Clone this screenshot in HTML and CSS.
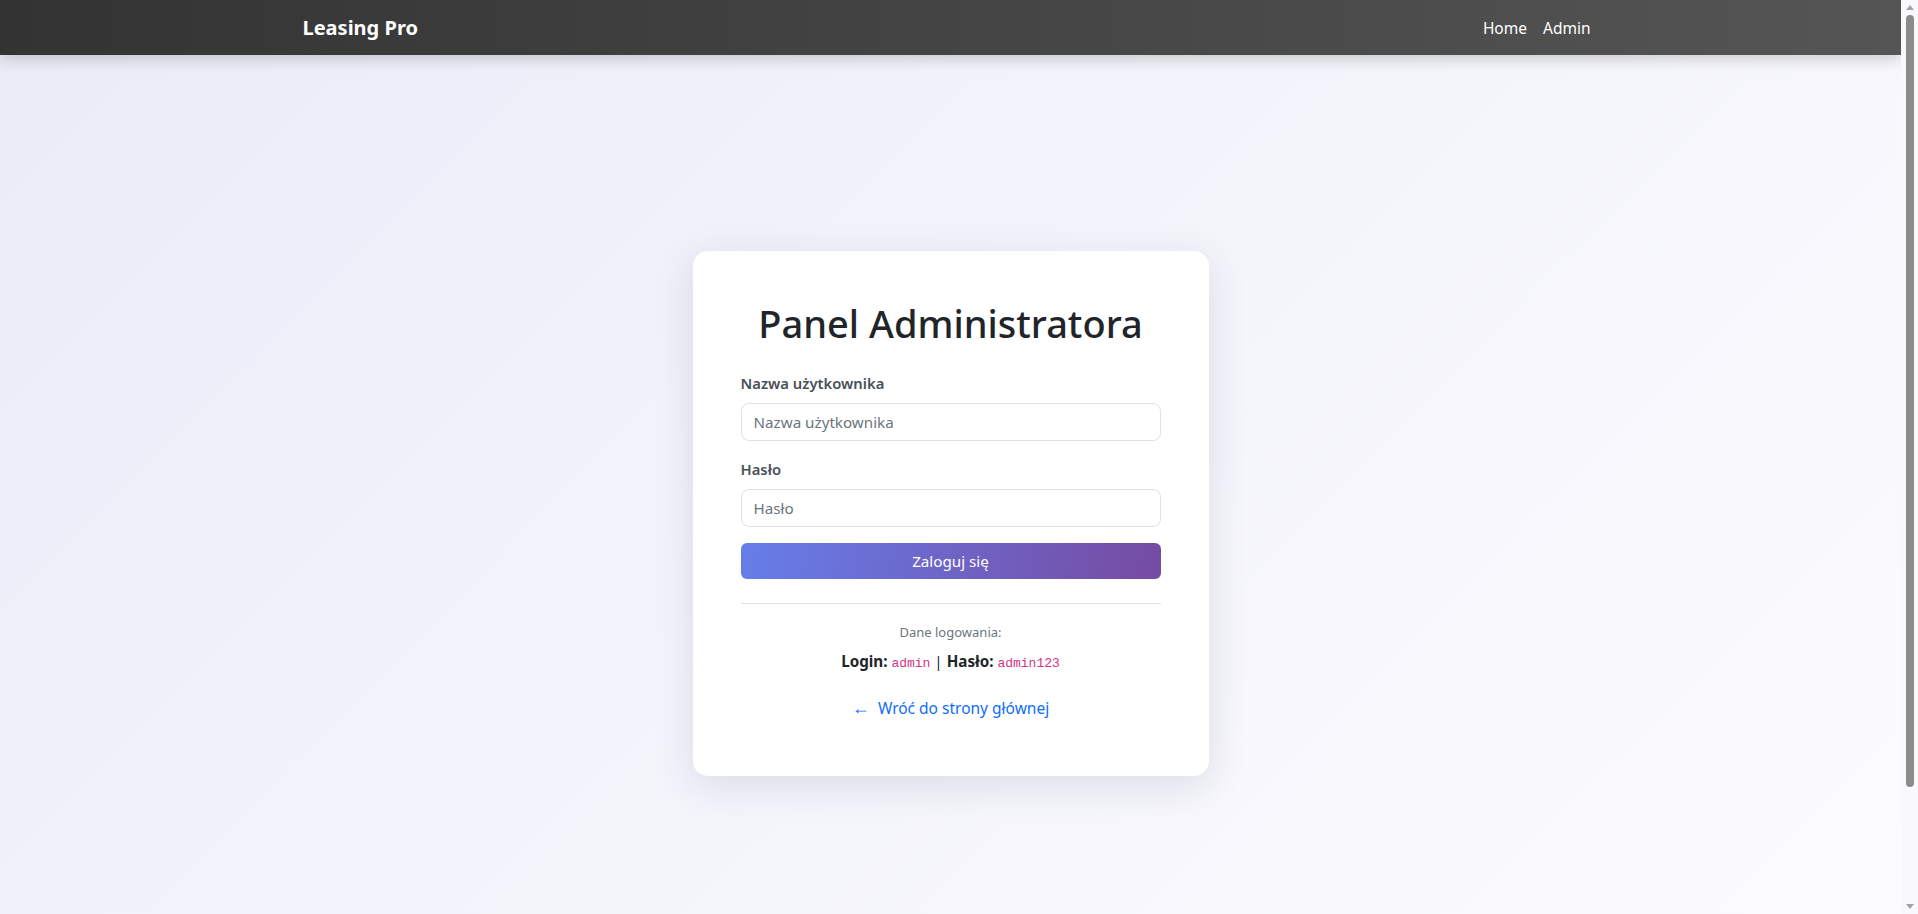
FILE: index.html
```html
<!DOCTYPE html>
<html lang="pl">
<head>
<meta charset="utf-8">
<title>Panel Administratora - Leasing Pro</title>
<link rel="stylesheet" href="styles.css">
</head>
<body>
<nav class="navbar">
  <div class="nav-container">
    <a class="brand" href="#">Leasing Pro</a>
    <ul class="nav-links">
      <li><a href="#">Home</a></li>
      <li><a href="#">Admin</a></li>
    </ul>
  </div>
</nav>
<main class="main">
  <div class="card">
    <h1 class="title">Panel Administratora</h1>
    <form class="form">
      <div class="field">
        <label class="label" for="username">Nazwa użytkownika</label>
        <input class="input" id="username" type="text" placeholder="Nazwa użytkownika">
      </div>
      <div class="field">
        <label class="label" for="password">Hasło</label>
        <input class="input" id="password" type="password" placeholder="Hasło">
      </div>
      <button class="btn" type="button">Zaloguj się</button>
    </form>
    <hr class="divider">
    <div class="info">
      <p class="info-muted">Dane logowania:</p>
      <p class="info-creds"><strong>Login:</strong> <code>admin</code> | <strong>Hasło:</strong> <code>admin123</code></p>
    </div>
    <div class="back">
      <a class="back-link" href="#"><span class="arrow">←</span> Wróć do strony głównej</a>
    </div>
  </div>
</main>
<div class="scrollbar" aria-hidden="true">
  <span class="sb-arrow sb-up"></span>
  <span class="sb-thumb"></span>
  <span class="sb-arrow sb-down"></span>
</div>
</body>
</html>
```
FILE: styles.css
```css
* { box-sizing: border-box; }
html, body { margin: 0; padding: 0; }
html { scrollbar-width: none; }
html::-webkit-scrollbar { display: none; }
body {
  font-family: "Segoe UI", "Noto Sans", "Open Sans", sans-serif;
  font-size: 15.2px;
  line-height: 24px;
  color: #212529;
  background: linear-gradient(135deg, #e9ebf8 0%, #f3f4fb 45%, #fdfdff 100%);
  min-height: 100vh;
  margin-right: 17px;
  padding-bottom: 70px;
}
.navbar {
  height: 55px;
  background: linear-gradient(90deg, #333333 0%, #444444 50%, #555555 100%);
  box-shadow: 0 4px 14px rgba(0, 0, 0, 0.18);
  position: relative;
  z-index: 2;
}
.nav-container {
  max-width: 1320px;
  margin: 0 auto;
  padding: 0 12px;
  height: 100%;
  display: flex;
  align-items: center;
  justify-content: space-between;
}
.brand {
  color: #fff;
  font-size: 20px;
  font-weight: 700;
  line-height: 30px;
  text-decoration: none;
}
.nav-links {
  list-style: none;
  margin: 0;
  padding: 0;
  display: flex;
}
.nav-links a {
  display: block;
  color: #fff;
  text-decoration: none;
  padding: 8px 8px;
  font-size: 15.5px;
}
.main {
  min-height: 100vh;
  display: flex;
  align-items: center;
  justify-content: center;
}
.card {
  width: 516px;
  background: #fff;
  border-radius: 15px;
  padding: 48px 48px 56px;
  box-shadow: 0 10px 40px rgba(30, 35, 70, 0.12);
  margin-top: 2px;
}
.title {
  margin: 0 0 24px;
  text-align: center;
  font-size: 38px;
  font-weight: 500;
  line-height: 48px;
  color: #212529;
}
.form { display: flex; flex-direction: column; }
.field { margin-bottom: 16px; }
.label {
  display: block;
  margin-bottom: 8px;
  font-size: 14.8px;
  line-height: 24px;
  font-weight: 600;
  color: #495057;
}
.input {
  display: block;
  width: 100%;
  height: 38px;
  padding: 6px 12px;
  font: inherit;
  font-size: 15.2px;
  color: #212529;
  border: 1px solid #dee2e6;
  border-radius: 8px;
  background: #fff;
}
.input::placeholder { color: #6c757d; opacity: 1; }
.btn {
  height: 36px;
  width: 100%;
  border: 0;
  border-radius: 6px;
  font: inherit;
  font-size: 15.2px;
  color: #fff;
  background: linear-gradient(100deg, #667eea 0%, #764ba2 100%);
  cursor: pointer;
}
.divider {
  border: 0;
  border-top: 1px solid #dee2e6;
  margin: 24px 0 18px;
}
.info { text-align: center; }
.info-muted {
  margin: 0 0 6px;
  font-size: 13px;
  line-height: 21px;
  color: #6c757d;
}
.info-creds {
  margin: 0;
  font-size: 15.2px;
}
.info-creds strong { font-weight: 700; }
code {
  font-family: "Liberation Mono", "DejaVu Sans Mono", monospace;
  font-size: 13px;
  color: #d63384;
}
.back {
  text-align: center;
  margin-top: 19px;
}
.back-link {
  color: #0d6efd;
  text-decoration: none;
  font-size: 15.5px;
}
.arrow {
  font-size: 18px;
  margin-right: 4px;
}

/* window scrollbar as in the screenshot */
.scrollbar {
  position: fixed;
  top: 0;
  right: 0;
  width: 17px;
  height: 100vh;
  background: #f9f9fb;
  display: flex;
  flex-direction: column;
  align-items: center;
  z-index: 10;
}
.sb-arrow {
  width: 0;
  height: 0;
  border-left: 4px solid transparent;
  border-right: 4px solid transparent;
}
.sb-up {
  margin-top: 5px;
  border-bottom: 5px solid #a3a3a3;
}
.sb-down {
  margin-top: auto;
  margin-bottom: 5px;
  border-top: 5px solid #a3a3a3;
}
.sb-thumb {
  width: 8px;
  height: 772px;
  margin-top: 5px;
  border-radius: 4px;
  background: #8b8b8b;
}
```
